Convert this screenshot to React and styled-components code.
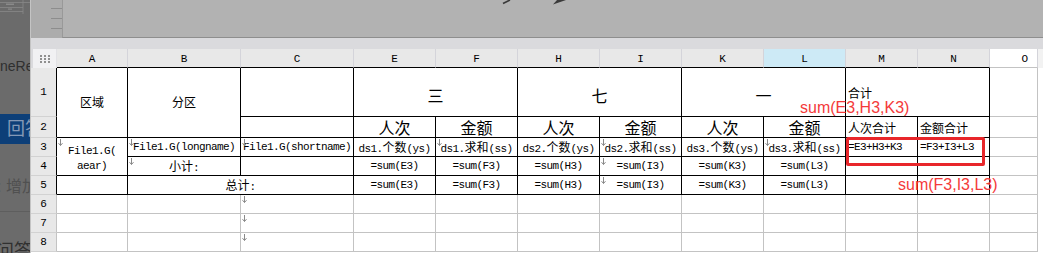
import React from 'react'
import styled, { createGlobalStyle } from 'styled-components'

const GlobalStyle = createGlobalStyle`
  html, body {
    margin: 0;
    padding: 0;
    background: #fff;
  }
  body {
    width: 1043px;
    height: 253px;
    overflow: hidden;
    font-family: "Liberation Sans", "Noto Sans CJK SC", sans-serif;
  }
`

const LETTERS = ['A', 'B', 'C', 'E', 'F', 'H', 'I', 'K', 'L', 'M', 'N', 'O']
const colOf = l => LETTERS.indexOf(l) + 2

// table content, A1 style addresses
const CELLS = [
  { at: 'A1', rs: 2, t: '区域' },
  { at: 'B1', rs: 2, t: '分区' },
  { at: 'C1' },
  { at: 'E1', cs: 2, t: '三', size: 16, top: 9 },
  { at: 'H1', cs: 2, t: '七', size: 16, top: 9 },
  { at: 'K1', cs: 2, t: '一', size: 16, top: 9 },
  { at: 'M1', cs: 2, t: '合计', left: true, top: 3 },
  { at: 'C2' },
  { at: 'E2', t: '人次', size: 16, top: 2 },
  { at: 'F2', t: '金额', size: 16, top: 2 },
  { at: 'H2', t: '人次', size: 16, top: 2 },
  { at: 'I2', t: '金额', size: 16, top: 2 },
  { at: 'K2', t: '人次', size: 16, top: 2 },
  { at: 'L2', t: '金额', size: 16, top: 2 },
  { at: 'M2', t: '人次合计', left: true, top: 3 },
  { at: 'N2', t: '金额合计', left: true, top: 3 },
  { at: 'A3', rs: 2, lines: ['File1.G(', 'aear)'], mark: true, top: 4 },
  { at: 'B3', t: 'File1.G(longname)', mark: true },
  { at: 'C3', t: 'File1.G(shortname)', mark: true },
  { at: 'E3', t: 'ds1.个数(ys)' },
  { at: 'F3', t: 'ds1.求和(ss)', mark: true },
  { at: 'H3', t: 'ds2.个数(ys)' },
  { at: 'I3', t: 'ds2.求和(ss)', mark: true },
  { at: 'K3', t: 'ds3.个数(ys)' },
  { at: 'L3', t: 'ds3.求和(ss)', mark: true },
  { at: 'M3', t: '=E3+H3+K3', left: true },
  { at: 'N3', t: '=F3+I3+L3', left: true },
  { at: 'B4', t: '小计:', mark: true },
  { at: 'C4' },
  { at: 'E4', t: '=sum(E3)' },
  { at: 'F4', t: '=sum(F3)' },
  { at: 'H4', t: '=sum(H3)' },
  { at: 'I4', t: '=sum(I3)', mark: true },
  { at: 'K4', t: '=sum(K3)' },
  { at: 'L4', t: '=sum(L3)' },
  { at: 'M4' },
  { at: 'N4' },
  { at: 'A5' },
  { at: 'B5', cs: 2, t: '总计:' },
  { at: 'E5', t: '=sum(E3)' },
  { at: 'F5', t: '=sum(F3)' },
  { at: 'H5', t: '=sum(H3)' },
  { at: 'I5', t: '=sum(I3)', mark: true },
  { at: 'K5', t: '=sum(K3)' },
  { at: 'L5', t: '=sum(L3)' },
  { at: 'M5' },
  { at: 'N5' },
]

const Page = styled.div`
  display: flex;
  width: 1043px;
  height: 253px;
  overflow: hidden;
`

/* dimmed page behind the designer window */
const Dim = styled.aside`
  flex: none;
  width: 30px;
  height: 253px;
  background: #6b6b6b;
  overflow: hidden;
  display: flex;
  flex-direction: column;
  white-space: nowrap;
`

const Thumb = styled.svg`
  display: block;
  flex: none;
`

const GhostText = styled.div`
  margin-top: ${p => p.$mt}px;
  margin-left: ${p => p.$ml || 0}px;
  font-size: ${p => p.$size}px;
  line-height: ${p => p.$size + 4}px;
  color: ${p => p.$color};
`

const BlueBand = styled.div`
  margin-top: 39px;
  height: 30px;
  background: #0d3f78;
  color: #8499b6;
  font-size: 18px;
  line-height: 30px;
  padding-left: 7px;
  flex: none;
`

const Rule = styled.div`
  margin-top: 14px;
  height: 1px;
  background: #5e5e5e;
  flex: none;
`

const Main = styled.main`
  flex: 1;
  display: flex;
  flex-direction: column;
  border-left: 1px solid #c4c4c4;
  background: #fff;
`

const TopBar = styled.div`
  height: 38px;
  display: flex;
  flex: none;
`

const Ruler = styled.div`
  width: 31px;
  background: #acacac;
  display: flex;
  flex-direction: column;
  align-items: flex-end;
  gap: 9px;
  padding-top: 8px;
  box-sizing: border-box;
`

const Tick = styled.span`
  width: 11px;
  height: 1px;
  background: #8d8d8d;
`

const Canvas = styled.div`
  flex: 1;
  position: relative;
  background: #b2b2b2;
  border-left: 1px solid #999;
  border-bottom: 1px solid #8e8e8e;
`

const CanvasArt = styled.svg`
  position: absolute;
  left: 0;
  top: 0;
`

const Band = styled.div`
  height: 11px;
  background: #dadadd;
  flex: none;
`

const Sheet = styled.div`
  position: relative;
  display: grid;
  grid-template-columns: 26px 71px 113px 113px repeat(6, 82px) 72px 72px 48px 1fr;
  grid-template-rows: 19px 49px 21px repeat(6, 19px);
`

const Corner = styled.div`
  grid-row: 1;
  grid-column: 1;
  background: #dadadd;
  padding-left: 2px;
  display: flex;
`

const CornerBox = styled.div`
  flex: 1;
  background: #f1f1f3;
  border-right: 1px solid #e2e2e6;
  display: flex;
  align-items: center;
  justify-content: center;
`

const ColHead = styled.div`
  grid-row: 1;
  grid-column: ${p => p.$c};
  display: flex;
  align-items: center;
  justify-content: ${p => (p.$end ? 'flex-end' : 'center')};
  padding-right: ${p => (p.$end ? 9 : 0)}px;
  padding-top: 1px;
  box-sizing: border-box;
  background: ${p => p.$bg};
  border-right: 1px solid #d4d4da;
  border-bottom: 1px solid ${p => (p.$edge ? '#000' : '#c3c3c3')};
  font-family: "Liberation Mono", monospace;
  font-size: 11px;
  color: #000;
`

const RowHead = styled.div`
  grid-row: ${p => p.$r};
  grid-column: 1;
  display: flex;
  align-items: center;
  justify-content: center;
  box-sizing: border-box;
  background: #e8e8e8;
  border-bottom: 1px solid #d2d2d2;
  border-right: 1px solid ${p => (p.$edge ? '#000' : '#c3c3c3')};
  font-family: "Liberation Mono", monospace;
  font-size: 11px;
  color: #000;
`

const Cell = styled.div`
  grid-row: ${p => p.$r} / span ${p => p.$rs || 1};
  grid-column: ${p => p.$c} / span ${p => p.$cs || 1};
  position: relative;
  display: flex;
  flex-direction: column;
  align-items: ${p => (p.$left ? 'flex-start' : 'center')};
  justify-content: center;
  padding: ${p => p.$top || 1}px 0 0 ${p => (p.$left ? 2 : 0)}px;
  box-sizing: border-box;
  background: #fff;
  border-right: 1px solid ${p => (p.$grid ? '#c3c3c3' : '#000')};
  border-bottom: 1px solid ${p => (p.$grid ? '#c3c3c3' : '#000')};
  font-family: "Liberation Mono", monospace;
  font-size: 11px;
  letter-spacing: -0.6px;
  line-height: 15px;
  white-space: nowrap;
  color: #000;
`

const Filler = styled.div`
  grid-row: ${p => p.$r};
  grid-column: 14;
  background: ${p => (p.$head ? '#f2f2f2' : '#fff')};
`

const Han = styled.span`
  font-family: "Noto Sans CJK SC", sans-serif;
  font-size: ${p => p.$size}px;
  letter-spacing: 0;
  line-height: ${p => p.$size + 3}px;
`

const MarkSvg = styled.svg`
  position: absolute;
  top: 1px;
  left: 1px;
`

const Note = styled.div`
  position: absolute;
  left: ${p => p.$x}px;
  top: ${p => p.$y}px;
  font-family: "Liberation Sans", sans-serif;
  font-size: 16px;
  line-height: 18px;
  color: #f43a3a;
  white-space: nowrap;
  pointer-events: none;
`

const Frame = styled.div`
  position: absolute;
  left: 815px;
  top: 88px;
  width: 139px;
  height: 29px;
  box-sizing: border-box;
  border: 3px solid #e8262a;
  border-radius: 2px;
  pointer-events: none;
`

const isHan = ch => /[\u3000-\u9fff\uff00-\uffef]/.test(ch)

// split into latin / chinese runs so each gets its own font
function Txt({ children, size = 12 }) {
  const runs = []
  for (const ch of children) {
    const han = isHan(ch)
    const last = runs[runs.length - 1]
    if (last && last.han === han) last.s += ch
    else runs.push({ han, s: ch })
  }
  return (
    <span>
      {runs.map((r, i) =>
        r.han ? <Han key={i} $size={size}>{r.s}</Han> : <React.Fragment key={i}>{r.s}</React.Fragment>
      )}
    </span>
  )
}

const Mark = () => (
  <MarkSvg width="5" height="7" viewBox="0 0 5 7">
    <path d="M2.5 0V6.5M0.5 4.2L2.5 6.5L4.5 4.2" stroke="#8a8a8a" strokeWidth="1" fill="none" />
  </MarkSvg>
)

const GridDots = () => (
  <svg width="10" height="8" viewBox="0 0 10 8">
    {[0, 1, 2].map(y =>
      [0, 1, 2].map(x => <rect key={`${x}${y}`} x={x * 4} y={y * 3} width="2" height="2" fill="#8f8f8f" />)
    )}
  </svg>
)

const ROW_NUMS = [1, 2, 3, 4, 5, 6, 7, 8]

export default function App() {
  const blanks = []
  for (let r = 6; r <= 8; r++) {
    LETTERS.forEach(l => blanks.push({ r, l, mark: l === 'C' }))
  }
  for (let r = 1; r <= 5; r++) blanks.push({ r, l: 'O' })

  return (
    <>
      <GlobalStyle />
      <Page>
        <Dim>
          <Thumb width="30" height="14" viewBox="0 0 30 14">
            <path d="M0 2.5H30M0 7.5H23M0 11.5H23M23 0V14" stroke="#888" strokeWidth="0.8" />
            <rect x="6" y="3.5" width="8" height="1.5" fill="#8a8a8a" />
            <rect x="8" y="8.5" width="4" height="1.2" fill="#8a8a8a" />
          </Thumb>
          <GhostText $mt={43} $size={14} $color="#2f2f2f">neRep</GhostText>
          <BlueBand>回答</BlueBand>
          <GhostText $mt={33} $ml={-3} $size={16} $color="#505050">: 增加</GhostText>
          <Rule />
          <GhostText $mt={28} $ml={-4} $size={18} $color="#303030">问答</GhostText>
        </Dim>

        <Main>
          <TopBar>
            <Ruler>
              <Tick />
              <Tick />
              <Tick />
            </Ruler>
            <Canvas>
              <CanvasArt width="600" height="8" viewBox="0 0 600 8">
                <path d="M447 0L440 3.5" stroke="#3a3a3a" strokeWidth="1.6" />
                <path d="M490 4.5L503 0H494Z" fill="#3a3a3a" />
              </CanvasArt>
            </Canvas>
          </TopBar>
          <Band />

          <Sheet>
            <Corner>
              <CornerBox>
                <GridDots />
              </CornerBox>
            </Corner>
            {LETTERS.map(l => (
              <ColHead
                key={l}
                $c={colOf(l)}
                $edge={l !== 'O'}
                $end={l === 'O'}
                $bg={l === 'L' ? '#cdeaf6' : l === 'O' ? '#fff' : '#e8e8e8'}
              >
                {l}
              </ColHead>
            ))}
            <Filler $r={1} $head />

            {ROW_NUMS.map(n => (
              <RowHead key={n} $r={n + 1} $edge={n <= 5}>
                {n}
              </RowHead>
            ))}
            {ROW_NUMS.map(n => (
              <Filler key={n} $r={n + 1} />
            ))}

            {CELLS.map(c => {
              const l = c.at[0]
              const r = Number(c.at.slice(1))
              return (
                <Cell
                  key={c.at}
                  $r={r + 1}
                  $c={colOf(l)}
                  $rs={c.rs}
                  $cs={c.cs}
                  $left={c.left}
                  $top={c.top}
                >
                  {c.mark && <Mark />}
                  {c.lines
                    ? c.lines.map(s => <span key={s}>{s}</span>)
                    : c.t && <Txt size={c.size}>{c.t}</Txt>}
                </Cell>
              )
            })}

            {blanks.map(b => (
              <Cell key={`${b.l}${b.r}`} $r={b.r + 1} $c={colOf(b.l)} $grid>
                {b.mark && <Mark />}
              </Cell>
            ))}

            <Note $x={769} $y={50}>sum(E3,H3,K3)</Note>
            <Frame />
            <Note $x={867} $y={127}>sum(F3,I3,L3)</Note>
          </Sheet>
        </Main>
      </Page>
    </>
  )
}
